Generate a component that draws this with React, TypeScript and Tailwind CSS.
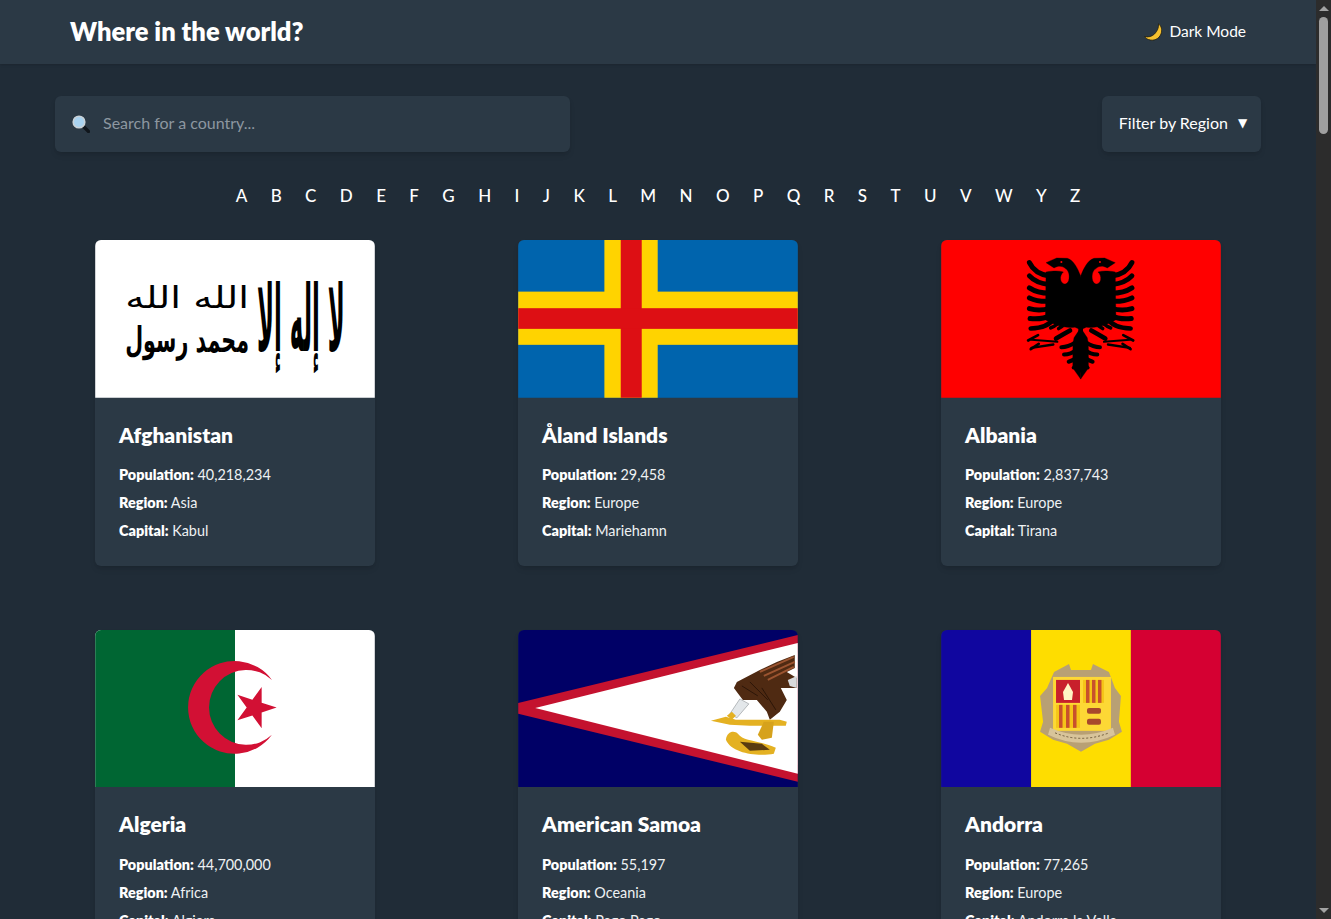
const letters = 'ABCDEFGHIJKLMNOPQRSTUVWYZ'.split('');

function Afghanistan() {
  const arabic = { fontFamily: "'DejaVu Sans', sans-serif", direction: 'rtl' as const, textAnchor: 'middle' as const };
  return (
    <svg viewBox="0 0 280 158" className="block h-full w-full">
      <rect width="280" height="158" fill="#fff" />
      <g transform="translate(206 111) scale(1 3.4)">
        <text {...arabic} fontWeight="700" fontSize="27" textLength="88" lengthAdjust="spacingAndGlyphs">
          لا إله إلا
        </text>
      </g>
      <g transform="translate(92 112) scale(1 1.35)">
        <text {...arabic} fontWeight="700" fontSize="26" textLength="124" lengthAdjust="spacingAndGlyphs">
          محمد رسول
        </text>
      </g>
      <g transform="translate(92 68) scale(1 1.5)">
        <text {...arabic} fontSize="20" textLength="124" lengthAdjust="spacingAndGlyphs">
          الله الله
        </text>
      </g>
    </svg>
  );
}

function Aland() {
  return (
    <svg viewBox="0 0 280 158" className="block h-full w-full">
      <rect width="280" height="158" fill="#0064ad" />
      <rect x="86.3" width="53.4" height="158" fill="#ffd300" />
      <rect y="51.7" width="280" height="53.3" fill="#ffd300" />
      <rect x="102.7" width="21" height="158" fill="#dd0f14" />
      <rect y="68.3" width="280" height="20.7" fill="#dd0f14" />
    </svg>
  );
}

function EagleHalf() {
  return (
    <g fill="#000" stroke="#000">
      <path
        strokeWidth="1"
        d="M362 108C352 84 342 62 322 55L290 54L258 68L282 84C296 76 308 78 316 86C326 92 330 106 326 122C320 138 306 134 302 120C300 110 304 102 310 96C296 92 280 92 258 96L256 240C284 256 314 266 345 262L362 270Z"
      />
      <g fill="none" strokeLinecap="round">
        <path strokeWidth="15" d="M268 108Q224 102 208 68" />
        <path strokeWidth="15" d="M268 134Q228 130 208 108" />
        <path strokeWidth="15" d="M268 160Q232 160 208 144" />
        <path strokeWidth="15" d="M268 184Q234 186 208 174" />
        <path strokeWidth="15" d="M268 206Q236 214 208 206" />
        <path strokeWidth="15" d="M272 226Q246 240 210 236" />
        <path strokeWidth="14" d="M282 236Q264 264 212 266" />
        <path strokeWidth="11" d="M302 240Q296 254 272 264" />
        <path strokeWidth="11" d="M320 240Q314 256 296 266" />
        <path strokeWidth="14" d="M330 272Q312 282 288 296" />
        <path strokeWidth="6" d="M292 306L214 300" />
        <path strokeWidth="7" d="M280 314L214 324" />
        <path strokeWidth="8" d="M234 286L204 302" />
        <path strokeWidth="8" d="M236 312L212 328" />
        <path strokeWidth="12" d="M346 308Q324 322 304 322" />
        <path strokeWidth="12" d="M350 330Q332 344 312 344" />
        <path strokeWidth="12" d="M352 350Q340 362 326 366" />
        <path strokeWidth="10" d="M354 368Q348 378 340 384" />
      </g>
      <path strokeWidth="1" d="M362 264L342 294C336 320 340 362 338 384L362 418Z" />
    </g>
  );
}

function Albania() {
  return (
    <svg viewBox="0 0 280 158" className="block h-full w-full">
      <rect width="280" height="158" fill="#f00" />
      <g transform="translate(19 0) scale(0.3333)">
        <EagleHalf />
        <g transform="translate(724 0) scale(-1 1)">
          <EagleHalf />
        </g>
        <rect x="355" y="112" width="14" height="286" fill="#000" />
        <circle cx="304" cy="66" r="3" fill="#f00" />
        <circle cx="420" cy="66" r="3" fill="#f00" />
      </g>
    </svg>
  );
}

function Algeria() {
  return (
    <svg viewBox="0 0 280 158" className="block h-full w-full">
      <rect width="280" height="158" fill="#fff" />
      <rect width="140" height="158" fill="#006633" />
      <path d="M177 50A46.5 46.5 0 1 0 177 105A37.5 37.5 0 1 1 177 50Z" fill="#d21034" />
      <polygon
        points="181.7,77.7 166.7,82.6 166.7,98.3 157.4,85.6 142.4,90.5 151.7,77.7 142.4,64.9 157.4,69.8 166.7,57.1 166.7,72.8"
        fill="#d21034"
      />
    </svg>
  );
}

function AmericanSamoa() {
  return (
    <svg viewBox="0 0 280 158" className="block h-full w-full">
      <rect width="280" height="158" fill="#000066" />
      <polygon points="0,73 280,5 280,152 0,84" fill="#c4122f" />
      <polygon points="17,78 280,13 280,144" fill="#fff" />
      <path
        d="M277 25L259 32L242 40L219 52L216 58L225 70L239 70L249 82L252 90L262 82L269 70L263 58L279 58L279 48L269 42L277 38Z"
        fill="#4f2a12"
      />
      <g stroke="#9c5430" strokeWidth="2" fill="none">
        <path d="M242 42L276 27" />
        <path d="M246 46L277 32" />
        <path d="M250 50L276 37" />
      </g>
      <g stroke="#2c1608" strokeWidth="1" fill="none">
        <path d="M224 56L240 66" />
        <path d="M232 52L250 70" />
        <path d="M244 58L258 80" />
      </g>
      <path d="M270 50L279 46L279 58L272 56Z" fill="#d8dadc" />
      <polygon points="212,84 222,69 231,74 219,88" fill="#e3e7ea" stroke="#8d9296" strokeWidth="0.6" />
      <path d="M209 86L214 82L218 86L214 90Z" fill="#e4b122" />
      <path d="M193 91L208 87L218 90L262 90L269 92L268 96L232 96L212 95Z" fill="#e4b122" />
      <path d="M246 92L256 92L254 108L244 110L240 105Z" fill="#d6a21c" />
      <path d="M208 110C209 102 216 100 220 104C226 112 240 110 258 118L256 124C240 127 214 124 208 110Z" fill="#e4b122" />
      <path d="M222 112L244 114L252 120L232 121Z" fill="#5a3b10" />
    </svg>
  );
}

function Andorra() {
  return (
    <svg viewBox="0 0 280 158" className="block h-full w-full">
      <rect width="90" height="158" fill="#10069f" />
      <rect x="90" width="100" height="158" fill="#fedd00" />
      <rect x="190" width="90" height="158" fill="#d50032" />
      <path
        d="M113 42L128 34L130 40L150 40L152 34L168 42L174 58L180 66L178 92L181 102L168 110L154 114L140 122L126 114L112 110L99 102L102 92L99 66L106 58Z"
        fill="#b8a074"
      />
      <rect x="112" y="47" width="58" height="54" fill="#fdd835" />
      <rect x="115" y="50" width="24" height="23" fill="#c8202c" />
      <path d="M127 53L132 62L131 70L123 70L122 62Z" fill="#fff3c4" />
      <rect x="142" y="50" width="21" height="23" fill="#f5c518" />
      <rect x="115" y="75" width="24" height="23" fill="#f5c518" />
      <g fill="#c8502c">
        <rect x="145" y="50" width="3.5" height="23" />
        <rect x="151" y="50" width="3.5" height="23" />
        <rect x="157" y="50" width="3.5" height="23" />
        <rect x="118" y="75" width="3.5" height="23" />
        <rect x="125" y="75" width="3.5" height="23" />
        <rect x="132" y="75" width="3.5" height="23" />
      </g>
      <g fill="#a8482c">
        <rect x="146" y="78" width="14" height="6" rx="2" />
        <rect x="146" y="89" width="14" height="6" rx="2" />
      </g>
      <path d="M109 98Q140 112 172 98L174 105Q140 121 107 105Z" fill="#d8c49a" />
      <path d="M114 103Q140 114 168 103" stroke="#6d5a3c" strokeWidth="1" strokeDasharray="2 2" fill="none" />
    </svg>
  );
}

const countries = [
  { name: 'Afghanistan', population: '40,218,234', region: 'Asia', capital: 'Kabul', Flag: Afghanistan },
  { name: 'Åland Islands', population: '29,458', region: 'Europe', capital: 'Mariehamn', Flag: Aland },
  { name: 'Albania', population: '2,837,743', region: 'Europe', capital: 'Tirana', Flag: Albania },
  { name: 'Algeria', population: '44,700,000', region: 'Africa', capital: 'Algiers', Flag: Algeria },
  { name: 'American Samoa', population: '55,197', region: 'Oceania', capital: 'Pago Pago', Flag: AmericanSamoa },
  { name: 'Andorra', population: '77,265', region: 'Europe', capital: 'Andorra la Vella', Flag: Andorra },
];

function Scrollbar() {
  return (
    <aside className="flex w-[15px] shrink-0 flex-col items-center bg-[#2c2c2c]">
      <div className="flex h-[17px] items-center justify-center">
        <div className="h-0 w-0 border-x-[5px] border-b-[5px] border-x-transparent border-b-[#a3a3a3]" />
      </div>
      <div className="flex-1">
        <div className="h-[117px] w-[9px] rounded-full bg-[#9f9f9f]" />
      </div>
      <div className="flex h-[17px] items-center justify-center">
        <div className="h-0 w-0 border-x-[5px] border-t-[5px] border-x-transparent border-t-[#a3a3a3]" />
      </div>
    </aside>
  );
}

export default function App() {
  return (
    <div className="flex h-screen overflow-hidden bg-[#202c37] text-white font-['Lato','Noto_Sans',sans-serif]">
      <div className="min-w-0 flex-1 overflow-hidden">
        <header className="flex h-16 items-center justify-between bg-[#2b3945] px-[70px] pb-[2px] shadow-sm">
          <h1 className="text-[25.5px] font-extrabold">Where in the world?</h1>
          <button className="mt-[2px] flex items-center gap-[7px] text-[15.5px]">
            <svg viewBox="0 0 18 18" className="h-[18px] w-[18px] shrink-0">
              <path
                d="M14.5 .8C17.5 3 18.5 7 17 11C15 16 9.5 18.5 4.5 16.5C3 16 1.5 15 .7 13.5C4 14.5 8 13.5 10.5 11C13.5 8 14.8 4.5 14.5 .8Z"
                fill="#f5c02e"
                stroke="#1c1a10"
                strokeWidth="0.8"
              />
            </svg>
            Dark Mode
          </button>
        </header>

        <main className="px-[55px] pt-8">
          <div className="flex items-center justify-between">
            <div className="flex h-14 w-[515px] items-center gap-[13px] rounded-md bg-[#2b3945] pb-[3px] pl-[17px] shadow-md">
              <svg viewBox="0 0 18 18" className="mt-[2px] h-[18px] w-[18px] shrink-0">
                <path d="M11 11L16.5 16.5" stroke="#10161c" strokeWidth="3.2" strokeLinecap="round" />
                <circle cx="7" cy="7" r="5.8" fill="#a9d3f0" stroke="#c9d2d8" strokeWidth="1.6" />
              </svg>
              <span className="text-base text-[#8d97a0]">Search for a country...</span>
            </div>
            <button className="flex h-14 w-[159px] items-center justify-center gap-[10px] rounded-md bg-[#2b3945] pb-[3px] pl-[3px] text-base shadow-md">
              Filter by Region
              <span className="font-['DejaVu_Sans',sans-serif] text-xs">▼</span>
            </button>
          </div>

          <nav className="mt-8 flex justify-center gap-[23.4px] text-[17px] font-medium">
            {letters.map((l) => (
              <button key={l} className="leading-[24px]">
                {l}
              </button>
            ))}
          </nav>

          <div className="mt-8 grid grid-cols-[280px_280px_280px] justify-between gap-y-16 px-10">
            {countries.map(({ name, population, region, capital, Flag }) => (
              <article key={name} className="h-[325.5px] overflow-hidden rounded-md bg-[#2b3945] shadow-md">
                <div className="h-[157.75px]">
                  <Flag />
                </div>
                <div className="px-6 pt-6">
                  <h2 className="mb-[13.5px] text-[21px] leading-[26px] font-extrabold">{name}</h2>
                  <p className="text-[14.4px] leading-[28px] text-[#eef1f3]">
                    <strong className="font-extrabold text-white">Population:</strong> {population}
                  </p>
                  <p className="text-[14.4px] leading-[28px] text-[#eef1f3]">
                    <strong className="font-extrabold text-white">Region:</strong> {region}
                  </p>
                  <p className="text-[14.4px] leading-[28px] text-[#eef1f3]">
                    <strong className="font-extrabold text-white">Capital:</strong> {capital}
                  </p>
                </div>
              </article>
            ))}
          </div>
        </main>
      </div>
      <Scrollbar />
    </div>
  );
}
